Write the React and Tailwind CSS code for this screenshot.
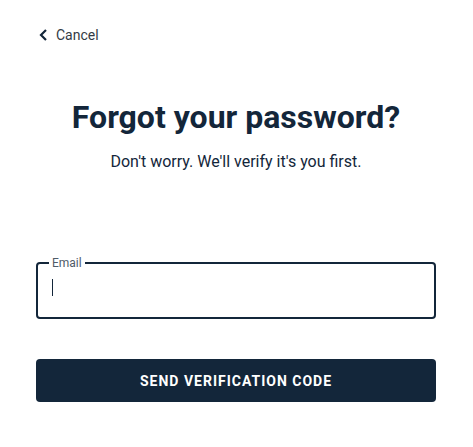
import { useState } from 'react';

function App() {
  const [email, setEmail] = useState('');

  return (
    <div className="min-h-[447px] bg-white px-9 pt-[25px] text-[#13263a]" style={{ fontFamily: 'Roboto, sans-serif' }}>
      {/* Back link */}
      <button className="flex items-center gap-[8px] pl-[3px] text-sm text-[#333b45]">
        <svg width="9" height="12" viewBox="0 0 9 12" fill="none">
          <path d="M7 1 L2 6 L7 11" stroke="#13263a" strokeWidth="2.2" />
        </svg>
        Cancel
      </button>

      <header className="mt-[52px] w-[400px] text-center">
        <h1 className="text-[32px] font-bold leading-[40px]">Forgot your password?</h1>
        <p className="mt-[13px] text-base">Don't worry. We'll verify it's you first.</p>
      </header>

      {/* Email field */}
      <fieldset className="mt-[83px] h-[62px] w-[400px] rounded-[4px] border-2 border-[#13263a] pl-[12px] pr-[12px]">
        <legend className="ml-[-1px] px-[3px] text-xs leading-[12px] text-[#4f5b68]">Email</legend>
        <div className="relative mt-[7px] h-[24px]">
          <input
            type="email"
            value={email}
            onChange={(e) => setEmail(e.target.value)}
            className="h-full w-full bg-transparent text-base text-[#13263a] outline-none"
          />
          {email === '' && (
            <span className="pointer-events-none absolute left-[2px] top-[3px] h-[17px] w-px bg-[#13263a]" />
          )}
        </div>
      </fieldset>

      <button className="mt-[40px] h-[43px] w-[400px] rounded-[4px] bg-[#13263a] text-sm font-bold uppercase tracking-[1px] text-white">
        Send verification code
      </button>
    </div>
  );
}

export default App;
